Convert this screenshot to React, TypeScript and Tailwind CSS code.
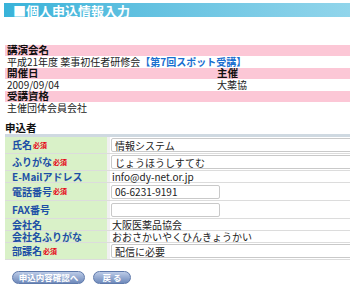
import React from "react";

const jp = "font-['Noto_Sans_CJK_JP','Noto_Sans',sans-serif]";

const Must = () => <span className="ml-[1px] text-[7px] font-bold text-[#e60012] leading-none">必須</span>;

interface RowProps {
  label: string;
  must?: boolean;
  h: string;
  children: React.ReactNode;
}

const Row = ({ label, must, h, children }: RowProps) => {
  return (
    <div className={`flex border-b border-[#dcdcdc] ${h}`}>
      <div className="w-[102px] shrink-0 bg-[#d9f1c8] pl-[7px] flex items-center text-[10px] font-bold text-[#1d4fa6] leading-none">
        {label}
        {must && <Must />}
      </div>
      <div className="flex-1 border-l-[3px] border-[#f0f0f0] pl-[1px] flex items-center">{children}</div>
    </div>
  );
};

const Field = ({ value, wide }: { value: string; wide?: boolean }) => (
  <input
    readOnly
    value={value}
    className={`h-[14px] ${wide ? "w-[260px]" : "w-[109px]"} shrink-0 border border-[#c9c9c9] rounded-[2px] bg-white px-[3px] text-[10px] leading-none text-[#222] outline-none`}
  />
);

const Pink = ({ children }: { children: React.ReactNode }) => (
  <div className="h-[11px] bg-[#fcc7d6] pl-[2px] flex items-center text-[10.5px] font-bold leading-none text-[#111]">{children}</div>
);

export default function App() {
  return (
    <div className={`w-[350px] h-[291px] overflow-hidden bg-white ${jp} text-[10px] text-[#222]`}>
      <div className="mt-[3px] ml-[4px] h-[14px] bg-gradient-to-r from-[#38b3d9] to-[#91d5eb] pl-[9px] flex items-center text-[13px] font-bold text-white leading-none">
        ■個人申込情報入力
      </div>

      <div className="mt-[28px] ml-[5px]">
        <Pink>講演会名</Pink>
        <div className="h-[12px] pl-[2px] flex items-center leading-none">
          平成21年度 薬事初任者研修会<span className="font-bold text-[#1a6fd0]">【第7回スポット受講】</span>
        </div>
        <div className="h-[11px] bg-[#fcc7d6] flex items-center text-[10.5px] font-bold leading-none text-[#111]">
          <span className="w-[212px] pl-[2px]">開催日</span>
          <span>主催</span>
        </div>
        <div className="h-[12px] flex items-center leading-none">
          <span className="w-[212px] pl-[2px]">2009/09/04</span>
          <span>大薬協</span>
        </div>
        <Pink>受講資格</Pink>
        <div className="h-[12px] pl-[2px] flex items-center leading-none">主催団体会員会社</div>
      </div>

      <div className="mt-[9px] ml-[5px] h-[11px] flex items-center text-[10.5px] font-bold leading-none text-[#111]">申込者</div>

      <div className="ml-[5px] border-t-[3px] border-[#cfd9e1]">
        <Row label="氏名" must h="h-[17px]">
          <Field value="情報システム" wide />
        </Row>
        <Row label="ふりがな" must h="h-[17px]">
          <Field value="じょうほうしすてむ" wide />
        </Row>
        <Row label="E-Mailアドレス" h="h-[12px]">
          <span className="pl-[1px] leading-none">info@dy-net.or.jp</span>
        </Row>
        <Row label="電話番号" must h="h-[18px]">
          <Field value="06-6231-9191" />
        </Row>
        <Row label="FAX番号" h="h-[18px]">
          <Field value="" />
        </Row>
        <Row label="会社名" h="h-[12px]">
          <span className="pl-[1px] leading-none">大阪医薬品協会</span>
        </Row>
        <Row label="会社名ふりがな" h="h-[12px]">
          <span className="pl-[1px] leading-none">おおさかいやくひんきょうかい</span>
        </Row>
        <Row label="部課名" must h="h-[17px]">
          <Field value="配信に必要" wide />
        </Row>
      </div>

      <div className="mt-[11px] ml-[12px] flex gap-[8px]">
        <div className="h-[13px] w-[73px] rounded-full border border-[#5f7aab] bg-gradient-to-b from-[#bccbe7] to-[#6f8abb] flex items-center justify-center text-[8.5px] font-bold text-white leading-none">
          申込内容確認へ
        </div>
        <div className="h-[13px] w-[38px] rounded-full border border-[#5f7aab] bg-gradient-to-b from-[#bccbe7] to-[#6f8abb] flex items-center justify-center text-[8.5px] font-bold text-white leading-none">
          戻 る
        </div>
      </div>
    </div>
  );
}
